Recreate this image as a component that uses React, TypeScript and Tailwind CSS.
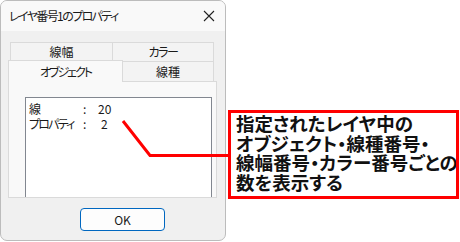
import React from "react";

const jp = "font-['Yu_Gothic_UI','Noto_Sans_CJK_JP',sans-serif] [font-feature-settings:'palt']";

function Tab({ label, className }: { label: string; className: string }) {
  return (
    <div className={`flex items-center justify-center text-[12px] text-[#1a1a1a] border border-[#dadada] ${className}`}>
      {label}
    </div>
  );
}

function Row({ label, value, labelClass, valueClass }: { label: string; value: string; labelClass: string; valueClass: string }) {
  return (
    <div className="flex h-[15px] items-center">
      <span className={`w-[54px] ${labelClass}`}>{label}</span>
      <span className="w-[15px]">:</span>
      <span className={valueClass}>{value}</span>
    </div>
  );
}

export default function App() {
  return (
    <div className={`relative w-[460px] h-[242px] bg-white flex ${jp}`}>
      {/* Dialog */}
      <div className="w-[226px] h-[241px] border border-[#bcbcbc] rounded-[7px] overflow-hidden bg-[#f0f0f0] flex flex-col">
        <div className="h-[30px] bg-[#f9f9f9] flex items-center justify-between pl-[8px] pr-[8px]">
          <span className="text-[12px] text-[#1a1a1a] tracking-[-1.6px]">レイヤ番号1のプロパティ</span>
          <svg width="14" height="14" viewBox="0 0 14 14" className="mr-[1px]">
            <path d="M2 2 L12 12 M12 2 L2 12" stroke="#222" strokeWidth="1.1" fill="none" />
          </svg>
        </div>

        <div className="flex-1 pl-[7px] pt-[11px] flex flex-col">
          {/* back row of tabs */}
          <div className="flex ml-[2px] h-[20px]">
            <Tab label="線幅" className="w-[103px] bg-[#f3f3f3]" />
            <Tab label="カラー" className="w-[102px] -ml-px bg-[#f3f3f3] tracking-[-1.5px]" />
          </div>
          {/* front row of tabs */}
          <div className="flex h-[21px] -mt-[2px] relative z-10">
            <div className="w-[115px] h-[22px] flex items-start justify-center pt-[2px] text-[12px] text-[#1a1a1a] bg-[#f9f9f9] border border-b-0 border-[#dadada] tracking-[-2px]">
              オブジェクト
            </div>
            <Tab label="線種" className="w-[92px] -ml-px mt-[1px] h-[20px] bg-[#f3f3f3] border-b-0" />
          </div>
          {/* panel */}
          <div className="w-[209px] h-[117px] border border-[#dadada] bg-[#f9f9f9] pl-[16px] pt-[15px] flex flex-col">
            <div className="w-[187px] flex-1 bg-white border border-b-0 border-[#828790] pl-[3px] pt-[3px] text-[12px] text-[#1a1a1a]">
              <Row label="線" value="20" labelClass="" valueClass="" />
              <Row label="プロパティ" value="2" labelClass="tracking-[-1.8px]" valueClass="pl-[3px]" />
            </div>
          </div>
          <div className="pt-[10px] pl-[72px]">
            <button className="w-[85px] h-[23px] rounded-[4px] border border-[#0067c0] bg-[#fdfdfd] text-[12px] text-[#1a1a1a] flex items-center justify-center">
              OK
            </button>
          </div>
        </div>
      </div>

      {/* Annotation */}
      <div className="ml-[2px] mt-[110px] w-[231px] h-[89px] border-[3px] border-[#ff0000] pl-[5px] pt-[1px] overflow-hidden">
        <div className="text-[18.5px] leading-[19.5px] font-bold text-[#111] whitespace-nowrap">
          <div>指定されたレイヤ中の</div>
          <div>オブジェクト・線種番号・</div>
          <div>線幅番号・カラー番号ごとの</div>
          <div>数を表示する</div>
        </div>
      </div>

      <svg className="absolute left-0 top-0 pointer-events-none" width="460" height="242">
        <polyline points="123,121 150,155.5 229,155.5" stroke="#ff0000" strokeWidth="3" fill="none" />
      </svg>
    </div>
  );
}
